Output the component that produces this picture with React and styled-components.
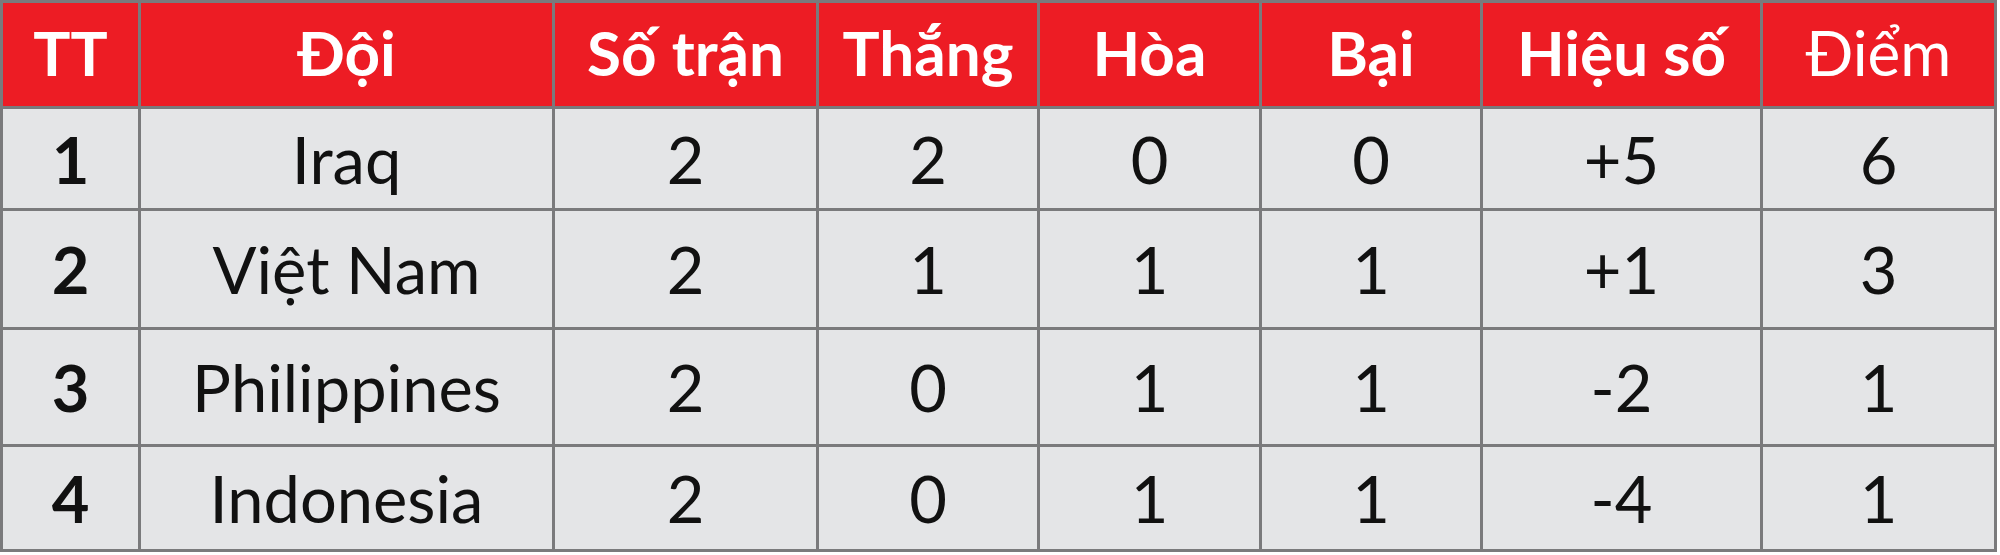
import React from 'react';
import styled, { createGlobalStyle } from 'styled-components';

const GlobalStyle = createGlobalStyle`
  body {
    margin: 0;
    background: #ffffff;
    font-family: 'Lato', 'Liberation Sans', sans-serif;
  }
`;

const Table = styled.div`
  display: grid;
  width: max-content;
  grid-template-columns: 135px 411px 261px 218px 219px 218px 277px 231px;
  grid-template-rows: 103px 99px 116px 114px 102px;
  gap: 3px;
  padding: 3px;
  background-color: #7a7a7c;
`;

const HeadCell = styled.div`
  display: flex;
  align-items: center;
  justify-content: center;
  background-color: #ed1c24;
  color: #ffffff;
  font-size: 62px;
  font-weight: ${(p) => (p.$light ? 400 : 700)};
  padding-bottom: 6px;
  box-sizing: border-box;
`;

const Cell = styled.div`
  display: flex;
  align-items: center;
  justify-content: center;
  background-color: #e4e5e7;
  color: #111111;
  font-size: 65px;
  font-weight: ${(p) => (p.$bold ? 700 : 400)};
  box-sizing: border-box;
`;

const headers = ['TT', 'Đội', 'Số trận', 'Thắng', 'Hòa', 'Bại', 'Hiệu số', 'Điểm'];

const rows = [
  ['1', 'Iraq', '2', '2', '0', '0', '+5', '6'],
  ['2', 'Việt Nam', '2', '1', '1', '1', '+1', '3'],
  ['3', 'Philippines', '2', '0', '1', '1', '-2', '1'],
  ['4', 'Indonesia', '2', '0', '1', '1', '-4', '1'],
];

const App = () => {
  return (
    <>
      <GlobalStyle />
      <Table>
        {headers.map((h) => (
          <HeadCell key={h} $light={h === 'Điểm'}>
            {h}
          </HeadCell>
        ))}
        {rows.map((r) =>
          r.map((v, i) => (
            <Cell key={r[0] + '-' + i} $bold={i === 0}>
              {v}
            </Cell>
          ))
        )}
      </Table>
    </>
  );
};

export default App;
